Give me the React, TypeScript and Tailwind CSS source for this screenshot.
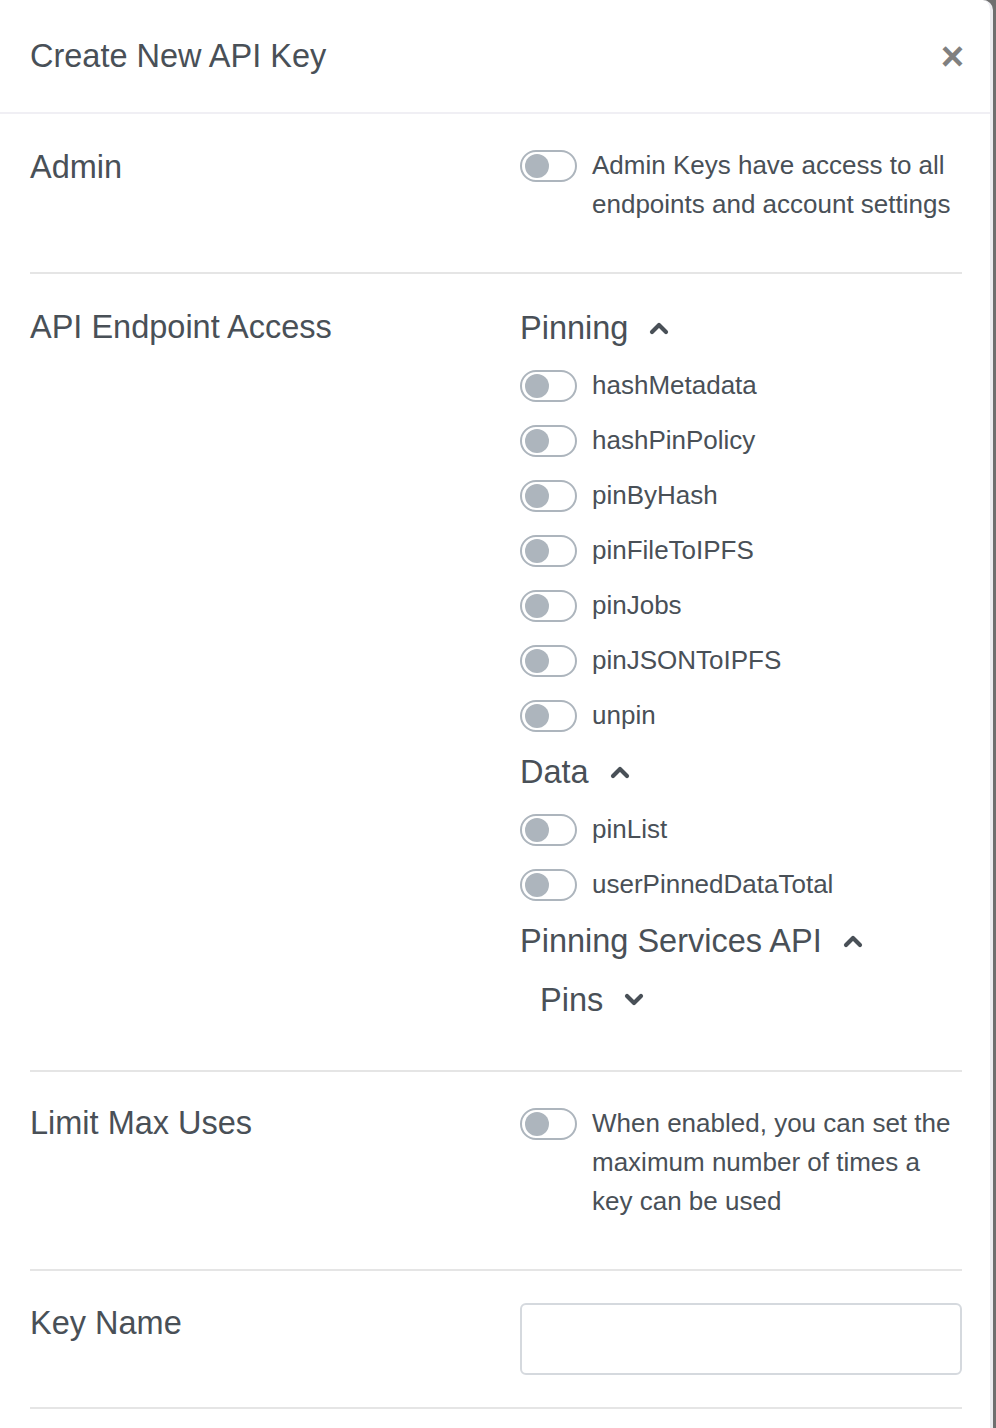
import React from 'react';

const font = { fontFamily: '"Liberation Sans", Arial, sans-serif' };

function Chevron({ up }: { up: boolean }) {
  return (
    <svg width="20" height="14" viewBox="0 0 20 14" className="shrink-0">
      <polyline
        points={up ? '3,11 10,4 17,11' : '3,3 10,10 17,3'}
        fill="none"
        stroke="#495057"
        strokeWidth="4.2"
        strokeLinecap="round"
        strokeLinejoin="round"
      />
    </svg>
  );
}

function Toggle() {
  return (
    <div className="flex h-[32px] w-[57px] shrink-0 items-center rounded-full border-2 border-[#adb5bd] bg-white">
      <div className="ml-[3px] h-[24px] w-[24px] rounded-full bg-[#adb5bd]" />
    </div>
  );
}

function ToggleRow({ label }: { label: string }) {
  return (
    <div className="flex h-[55px] items-center gap-[15px]">
      <Toggle />
      <span className="text-[26px] text-[#495057]">{label}</span>
    </div>
  );
}

function Heading({ title, open, className = '' }: { title: string; open: boolean; className?: string }) {
  return (
    <div className={`flex h-[44px] items-center gap-[21px] text-[32.5px] leading-[44px] text-[#495057] ${className}`}>
      <span>{title}</span>
      <Chevron up={open} />
    </div>
  );
}

function Group({ title, items, first }: { title: string; items: string[]; first?: boolean }) {
  return (
    <div className={first ? '' : 'mt-[7px]'}>
      <Heading title={title} open />
      <div className="mt-[8px]">
        {items.map((item) => (
          <ToggleRow key={item} label={item} />
        ))}
      </div>
    </div>
  );
}

export default function App() {
  return (
    <div className="min-h-[1428px] bg-[#6f6f6f]" style={font}>
      <div className="min-h-[1428px] w-[993px] overflow-hidden rounded-tr-[10px] border-r-[3px] border-[#ececf0] bg-white">
        <div className="flex h-[114px] items-center justify-between border-b-2 border-[#f0eff4] pl-[30px] pr-[26px]">
          <h1 className="text-[32.5px] text-[#495057]">Create New API Key</h1>
          <span className="text-[40px] font-bold leading-none text-[#808080]">×</span>
        </div>

        <div className="pl-[30px] pr-[28px]">
          <div className="grid grid-cols-[490px_1fr] border-b-2 border-[#e5e5e5] pb-[48px] pt-[32px]">
            <div className="mt-[3px] text-[32.5px] leading-[36px] text-[#495057]">Admin</div>
            <div className="flex items-start gap-[15px]">
              <div className="mt-[4px]">
                <Toggle />
              </div>
              <p className="text-[26px] leading-[39px] text-[#495057]">
                Admin Keys have access to all endpoints and account settings
              </p>
            </div>
          </div>

          <div className="grid grid-cols-[490px_1fr] border-b-2 border-[#e5e5e5] pb-[48px] pt-[32px]">
            <div className="mt-[3px] text-[32.5px] leading-[36px] text-[#495057]">API Endpoint Access</div>
            <div>
              <Group
                first
                title="Pinning"
                items={['hashMetadata', 'hashPinPolicy', 'pinByHash', 'pinFileToIPFS', 'pinJobs', 'pinJSONToIPFS', 'unpin']}
              />
              <Group title="Data" items={['pinList', 'userPinnedDataTotal']} />
              <Heading title="Pinning Services API" open className="mt-[7px]" />
              <Heading title="Pins" open={false} className="ml-[20px] mt-[15px]" />
            </div>
          </div>

          <div className="grid grid-cols-[490px_1fr] border-b-2 border-[#e5e5e5] pb-[48px] pt-[32px]">
            <div className="mt-[1px] text-[32.5px] leading-[36px] text-[#495057]">Limit Max Uses</div>
            <div className="flex items-start gap-[15px]">
              <div className="mt-[4px]">
                <Toggle />
              </div>
              <p className="text-[26px] leading-[39px] text-[#495057]">
                When enabled, you can set the maximum number of times a key can be used
              </p>
            </div>
          </div>

          <div className="grid grid-cols-[490px_1fr] border-b-2 border-[#e5e5e5] pb-[32px] pt-[32px]">
            <div className="mt-[2px] text-[32.5px] leading-[36px] text-[#495057]">Key Name</div>
            <input
              type="text"
              className="h-[72px] w-full rounded-[6px] border-2 border-[#d5d9de] bg-white px-4 text-[26px] outline-none"
            />
          </div>
        </div>
      </div>
    </div>
  );
}
